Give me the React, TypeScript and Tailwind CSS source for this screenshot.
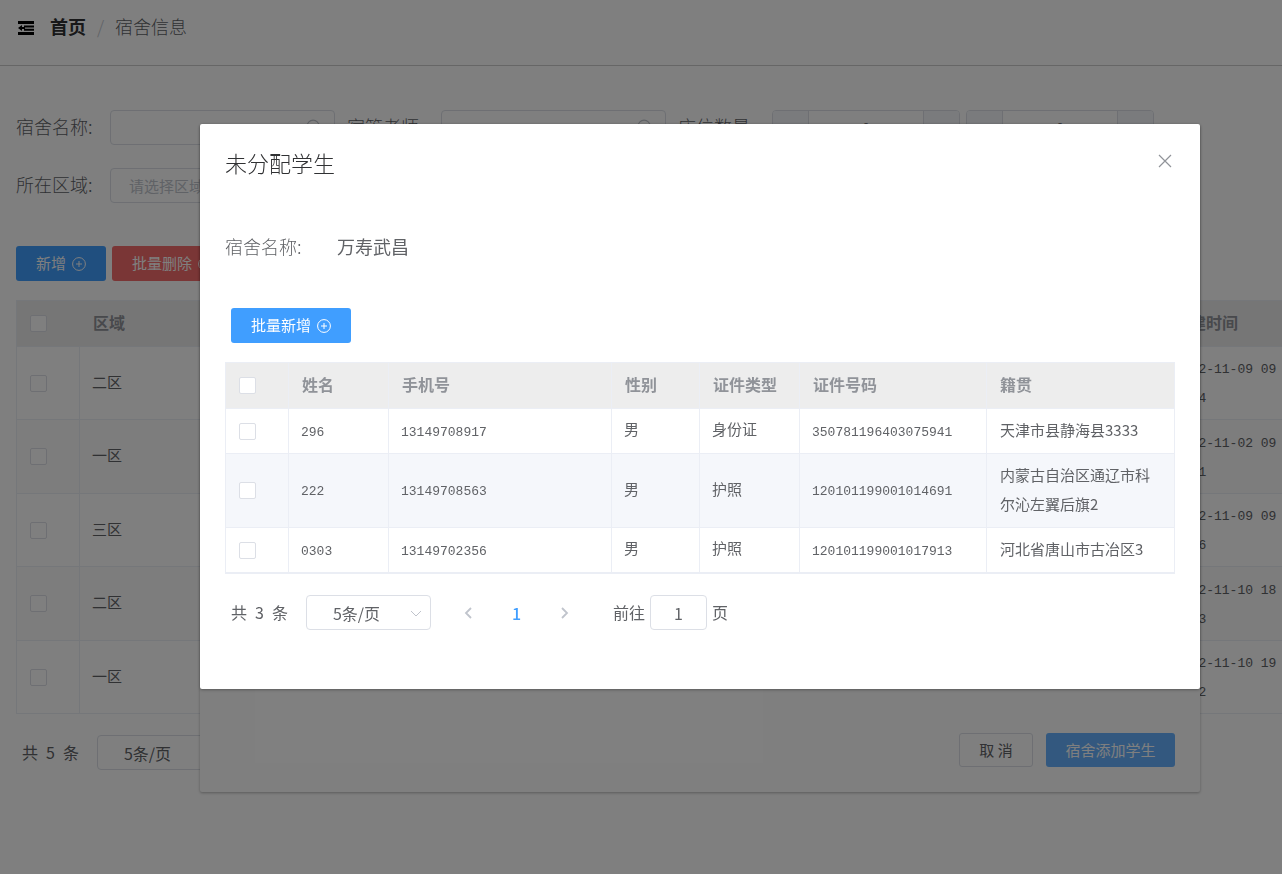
import React from "react";

interface Dorm {
  area: string;
  date: string;
  rest: string;
}

interface Student {
  name: string;
  phone: string;
  gender: string;
  idType: string;
  idNumber: string;
  origin: string;
}

const dorms: Dorm[] = [
  { area: "二区", date: "2022-11-09 09", rest: "7:14" },
  { area: "一区", date: "2022-11-02 09", rest: "5:21" },
  { area: "三区", date: "2022-11-09 09", rest: "8:36" },
  { area: "二区", date: "2022-11-10 18", rest: "2:03" },
  { area: "一区", date: "2022-11-10 19", rest: "6:52" },
];

const students: Student[] = [
  { name: "296", phone: "13149708917", gender: "男", idType: "身份证", idNumber: "350781196403075941", origin: "天津市县静海县3333" },
  { name: "222", phone: "13149708563", gender: "男", idType: "护照", idNumber: "120101199001014691", origin: "内蒙古自治区通辽市科尔沁左翼后旗2" },
  { name: "0303", phone: "13149702356", gender: "男", idType: "护照", idNumber: "120101199001017913", origin: "河北省唐山市古冶区3" },
];

const studentColumns = ["姓名", "手机号", "性别", "证件类型", "证件号码", "籍贯"];

function FoldIcon() {
  return (
    <svg viewBox="0 0 16 14" className="h-[14px] w-4 shrink-0" fill="#000">
      <path d="M0 0h16v3H0zM6 4.4h10v2H6zM6 7.8h10v2H6zM0 11h16v3H0zM0 7l4-3v2h3v2H4v2z" />
    </svg>
  );
}

function PlusCircle() {
  return (
    <svg viewBox="0 0 14 14" className="h-[14px] w-[14px]" fill="none" stroke="currentColor" strokeWidth="1">
      <circle cx="7" cy="7" r="6.4" />
      <path d="M7 4v6M4 7h6" />
    </svg>
  );
}

function SearchIcon() {
  return (
    <svg viewBox="0 0 14 14" className="absolute top-[9px] right-[13px] h-4 w-4" fill="none" stroke="#c0c4cc">
      <circle cx="6.2" cy="6.2" r="5.2" />
      <path d="M10 10l3.5 3.5" />
    </svg>
  );
}

function Arrow({ d }: { d: string }) {
  return (
    <svg viewBox="0 0 12 12" className="h-3 w-3" fill="none" stroke="#c0c4cc" strokeWidth="1.8">
      <path d={d} />
    </svg>
  );
}

function Tick({ label }: { label: string }) {
  return (
    <input
      type="checkbox"
      aria-label={label}
      className="block h-[17px] w-[17px] appearance-none rounded-xs border border-[#dcdfe6] bg-white"
    />
  );
}

function SearchField({ id, label }: { id: string; label: string }) {
  return (
    <div className="flex items-center">
      <label htmlFor={id} className="w-[94px] shrink-0 pb-1 text-lg">{label}:</label>
      <div className="relative">
        <input id={id} className="block h-[35px] w-[225px] rounded border border-[#dcdfe6] bg-white px-4" />
        <SearchIcon />
      </div>
    </div>
  );
}

function NumberField({ id, label }: { id: string; label: string }) {
  return (
    <div className="flex h-[35px] w-[188px] overflow-hidden rounded border border-[#dcdfe6]">
      <button aria-label="减少" className="w-9 shrink-0 border-r border-[#dcdfe6] bg-[#f5f7fa]">-</button>
      <input id={id} aria-label={label} defaultValue="0" className="w-full min-w-0 bg-white text-center text-base" />
      <button aria-label="增加" className="w-9 shrink-0 border-l border-[#dcdfe6] bg-[#f5f7fa]">+</button>
    </div>
  );
}

function PageSize() {
  return (
    <div className="relative ml-[18px]">
      <select
        aria-label="每页条数"
        className="block h-[35px] w-[125px] appearance-none rounded border border-[#dcdfe6] bg-white pl-[26px] text-base font-normal"
      >
        <option>5条/页</option>
      </select>
      <svg viewBox="0 0 12 12" className="pointer-events-none absolute top-3 right-[9px] h-3 w-3" fill="none" stroke="#c0c4cc">
        <path d="M1 4l5 5 5-5" />
      </svg>
    </div>
  );
}

function Total({ count }: { count: number }) {
  return (
    <span className="flex gap-2 pb-[2px] text-base">
      <span>共</span>
      <span>{count}</span>
      <span>条</span>
    </span>
  );
}

function DormPage() {
  return (
    <div className="min-h-screen overflow-hidden bg-white">
      <header className="flex h-[66px] items-start border-b border-[#ccc] pt-3 pl-[18px]">
        <div className="flex items-center">
          <FoldIcon />
          <nav className="ml-4 flex items-center pb-[3px] text-lg">
            <a href="#" className="font-bold text-[#303133]">首页</a>
            <span className="mx-[11px] text-[#c0c4cc]">/</span>
            <span>宿舍信息</span>
          </nav>
        </div>
      </header>

      <main className="px-4 pt-11">
        <div className="flex whitespace-nowrap">
          <SearchField id="dorm" label="宿舍名称" />
          <div className="ml-3">
            <SearchField id="teacher" label="宿管老师" />
          </div>
          <div className="ml-3 flex items-center">
            <label htmlFor="beds-min" className="w-[94px] shrink-0 pb-1 text-lg">床位数量:</label>
            <div className="flex gap-[6px]">
              <NumberField id="beds-min" label="床位数量下限" />
              <NumberField id="beds-max" label="床位数量上限" />
            </div>
          </div>
        </div>
        <div className="mt-[23px] flex items-center">
          <label htmlFor="area" className="w-[94px] shrink-0 pb-1 text-lg">所在区域:</label>
          <input
            id="area"
            placeholder="请选择区域"
            className="h-[35px] w-[225px] rounded border border-[#dcdfe6] bg-white px-[18px] text-[15px] font-normal placeholder:text-[#c0c4cc]"
          />
        </div>

        <div className="mt-[43px] flex gap-[6px] text-[15px] font-normal text-white">
          <button className="flex h-[35px] w-[90px] items-center justify-center gap-[6px] rounded-[3px] bg-[#409eff]">
            新增 <PlusCircle />
          </button>
          <button className="flex h-[35px] w-[120px] items-center justify-center gap-[6px] rounded-[3px] bg-[#f56c6c]">
            批量删除 <PlusCircle />
          </button>
        </div>

        <table className="mt-[19px] w-[1268px] table-fixed border-separate border-spacing-0 border-t border-l border-[#ebeef5] text-left text-[15px] font-normal">
          <colgroup>
            <col className="w-[63px]" />
            <col />
            <col className="w-[121px]" />
          </colgroup>
          <thead>
            <tr className="h-[46px] bg-[#ededed] text-base text-[#909399]">
              <th className="border-b border-[#ebeef5] pl-[13px]"><Tick label="全选宿舍" /></th>
              <th className="border-b border-[#ebeef5] pb-1 pl-[13px]">区域</th>
              <th className="border-b border-[#ebeef5] pb-1 pl-[11px]">创建时间</th>
            </tr>
          </thead>
          <tbody>
            {dorms.map((dorm, i) => (
              <tr key={i} className="h-[73px] even:h-[74px] even:bg-[#fafafa]">
                <td className="border-r border-b border-[#ebeef5] pl-[13px]"><Tick label={`选择宿舍${i + 1}`} /></td>
                <td className="border-r border-b border-[#ebeef5] pb-[2px] pl-3">{dorm.area}</td>
                <td className="border-r border-b border-[#ebeef5] pt-[2px] pl-3 font-['Liberation_Mono',monospace] text-[13px] leading-[29px] whitespace-nowrap">
                  {dorm.date}
                  <br />
                  {dorm.rest}
                </td>
              </tr>
            ))}
          </tbody>
        </table>

        <div className="mt-[21px] flex items-center pl-[6px] font-normal">
          <Total count={5} />
          <PageSize />
        </div>
      </main>
    </div>
  );
}

function StudentTable() {
  const cell = "border-r border-b border-[#ebeef5] pb-[3px] pl-3";
  const digits = "border-r border-b border-[#ebeef5] pt-[3px] pl-3 font-['Liberation_Mono',monospace] text-[13px]";

  return (
    <table className="w-full table-fixed border-separate border-spacing-0 border-t border-l border-[#ebeef5] text-left text-[15px] font-normal">
      <colgroup>
        <col className="w-[63px]" />
        <col className="w-[100px]" />
        <col className="w-[223px]" />
        <col className="w-[88px]" />
        <col className="w-[100px]" />
        <col className="w-[187px]" />
        <col />
      </colgroup>
      <thead>
        <tr className="h-[46px] bg-[#ededed] text-base text-[#909399]">
          <th className="border-r border-b border-[#ebeef5] pl-[13px]"><Tick label="全选学生" /></th>
          {studentColumns.map((title) => (
            <th key={title} className="border-r border-b border-[#ebeef5] pb-1 pl-[13px]">{title}</th>
          ))}
        </tr>
      </thead>
      <tbody>
        {students.map((s) => (
          <tr key={s.name} className="h-[45px] even:bg-[#f5f7fb]">
            <td className="border-r border-b border-[#ebeef5] pl-[13px]"><Tick label={`选择${s.name}`} /></td>
            <td className={digits}>{s.name}</td>
            <td className={digits}>{s.phone}</td>
            <td className={cell}>{s.gender}</td>
            <td className={cell}>{s.idType}</td>
            <td className={digits}>{s.idNumber}</td>
            <td className="border-r border-b border-[#ebeef5] pt-[6px] pr-5 pb-[9px] pl-[13px] leading-[29px]">{s.origin}</td>
          </tr>
        ))}
      </tbody>
    </table>
  );
}

export default function App() {
  return (
    <div className="font-['Noto_Sans_CJK_SC',sans-serif] font-light text-[#606266]">
      <DormPage />

      {/* parent dialog, sits under the mask */}
      <div className="fixed inset-0 pt-[124px] pr-[82px] pl-[200px]">
        <section className="flex h-[668px] items-end justify-end gap-[13px] rounded-xs bg-white px-[25px] pb-[25px] text-[15px] font-normal shadow-[0_1px_3px_rgba(0,0,0,0.3)]">
          <button className="h-[34px] w-[74px] rounded-[3px] border border-[#dcdfe6] bg-white">取 消</button>
          <button className="h-[34px] w-[129px] rounded-[3px] bg-[#66b1ff] text-white">宿舍添加学生</button>
        </section>
      </div>

      <div className="fixed inset-0 bg-black/50" />

      <div className="fixed inset-0 pt-[124px] pr-[82px] pl-[200px]">
        <section
          role="dialog"
          aria-label="未分配学生"
          className="rounded-xs bg-white px-[25px] pb-[59px] shadow-[0_1px_3px_rgba(0,0,0,0.3)]"
        >
          <header className="flex items-start justify-between pt-5">
            <h2 className="text-[22px] leading-9 text-[#303133]">未分配学生</h2>
            <button aria-label="关闭" className="mt-[10px] mr-[3px]">
              <svg viewBox="0 0 14 14" className="h-[14px] w-[14px]" fill="none" stroke="#909399" strokeWidth="1.2">
                <path d="M1 1l12 12M13 1L1 13" />
              </svg>
            </button>
          </header>

          <div className="mt-12 flex h-9 items-center text-lg">
            <span className="w-28">宿舍名称:</span>
            <span className="font-normal">万寿武昌</span>
          </div>

          <button className="mt-11 ml-[6px] flex h-[35px] w-[120px] items-center justify-center gap-[6px] rounded-[3px] bg-[#409eff] text-[15px] font-normal text-white">
            批量新增 <PlusCircle />
          </button>

          <div className="mt-[19px] border-b border-[#ebeef5]">
            <StudentTable />
          </div>

          <div className="mt-[21px] flex items-center pl-[6px] text-base font-normal">
            <Total count={3} />
            <PageSize />
            <button aria-label="上一页" className="ml-[31px]"><Arrow d="M9 1L4 6l5 5" /></button>
            <button className="ml-[38px] font-medium text-[#409eff]">1</button>
            <button aria-label="下一页" className="ml-[38px]"><Arrow d="M3 1l5 5-5 5" /></button>
            <label htmlFor="jump" className="ml-[42px] pb-[2px]">前往</label>
            <input
              id="jump"
              defaultValue="1"
              className="mx-[5px] h-[35px] w-[57px] rounded border border-[#dcdfe6] bg-white text-center"
            />
            <span className="pb-[2px]">页</span>
          </div>
        </section>
      </div>
    </div>
  );
}
